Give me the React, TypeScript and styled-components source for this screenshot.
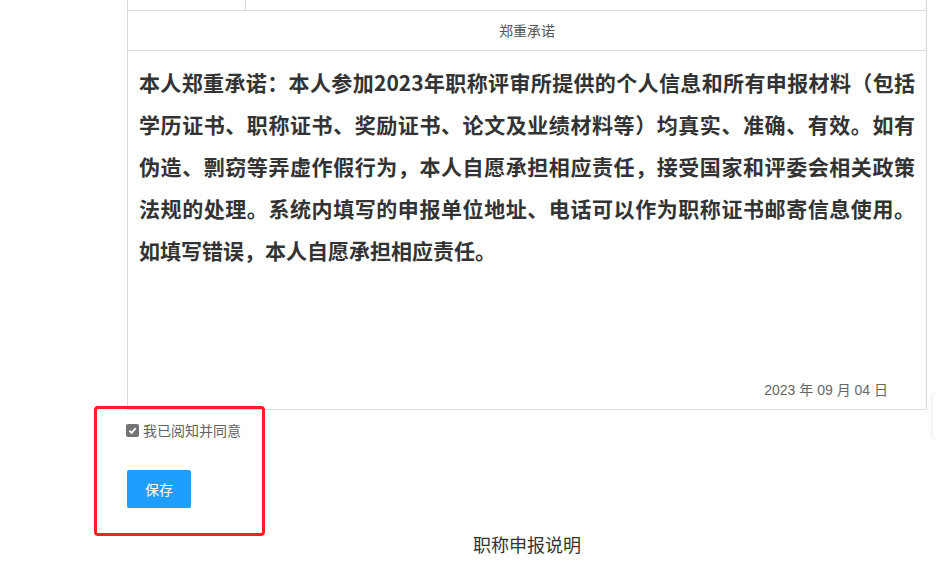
import styled, { createGlobalStyle } from "styled-components";

const GlobalStyle = createGlobalStyle`
    html, body {
        margin: 0;
        padding: 0;
        background: #fff;
    }
    body {
        font-family: "Noto Sans CJK SC", "Liberation Sans", sans-serif;
        color: #333;
    }
`;

const Page = styled.div`
    position: relative;
    width: 936px;
    height: 585px;
    overflow: hidden;
`;

const Column = styled.div`
    margin-left: 127px;
    width: 800px;
`;

const Table = styled.div`
    border: 1px solid #d9d9de;
    border-top: none;
`;

const PrevRow = styled.div`
    display: grid;
    grid-template-columns: 118px 1fr;
    height: 10px;
    border-bottom: 1px solid #d9d9de;
`;

type CellProps = { $first?: boolean };
const PrevCell = styled.div<CellProps>`
    border-right: ${(p: CellProps) => (p.$first ? "1px solid #d9d9de" : "none")};
`;

const HeadRow = styled.div`
    box-sizing: border-box;
    height: 40px;
    padding-bottom: 2px;
    display: flex;
    align-items: center;
    justify-content: center;
    font-size: 14px;
    line-height: 20px;
    color: #555;
    border-bottom: 1px solid #d9d9de;
`;

const PledgeCell = styled.div`
    box-sizing: border-box;
    height: 358px;
    padding: 10px 11px 0;
    display: flex;
    flex-direction: column;
`;

type LineProps = { $last?: boolean };
const Line = styled.div<LineProps>`
    font-size: 21px;
    font-weight: 700;
    line-height: 42px;
    color: #333;
    white-space: nowrap;
    text-align: justify;
    text-align-last: ${(p: LineProps) => (p.$last ? "left" : "justify")};
`;

const DateText = styled.div`
    margin-top: auto;
    align-self: flex-end;
    margin-right: 27px;
    margin-bottom: 9px;
    font-family: "Liberation Sans", "Noto Sans CJK SC", sans-serif;
    font-size: 14px;
    line-height: 20px;
    color: #666;
`;

const Agree = styled.label`
    margin-top: 10px;
    margin-left: -1px;
    height: 20px;
    display: flex;
    align-items: center;
    gap: 4px;
    font-size: 14px;
    color: #5f6166;
    cursor: pointer;
`;

const CheckBox = styled.span`
    width: 13px;
    height: 13px;
    border-radius: 2px;
    background: #747474;
    display: flex;
    align-items: center;
    justify-content: center;
`;

const SaveButton = styled.button`
    margin-top: 30px;
    width: 64px;
    height: 38px;
    border: none;
    border-radius: 2px;
    background: #1e9fff;
    color: #fff;
    font-family: "Noto Sans CJK SC", sans-serif;
    font-size: 14px;
    cursor: pointer;
`;

const Title = styled.div`
    margin-top: 23px;
    text-align: center;
    font-size: 18px;
    line-height: 26px;
    color: #333;
`;

const Highlight = styled.div`
    position: absolute;
    left: 94px;
    top: 406px;
    width: 171px;
    height: 130px;
    box-sizing: border-box;
    border: 3px solid #ff1f1f;
    border-radius: 4px;
    pointer-events: none;
`;

const SideShadow = styled.div`
    position: absolute;
    left: 933px;
    top: 394px;
    width: 40px;
    height: 44px;
    background: #fff;
    box-shadow: 0 0 5px rgba(0, 0, 0, 0.12);
`;

const lines = [
    "本人郑重承诺：本人参加2023年职称评审所提供的个人信息和所有申报材料（包括",
    "学历证书、职称证书、奖励证书、论文及业绩材料等）均真实、准确、有效。如有",
    "伪造、剽窃等弄虚作假行为，本人自愿承担相应责任，接受国家和评委会相关政策",
    "法规的处理。系统内填写的申报单位地址、电话可以作为职称证书邮寄信息使用。",
    "如填写错误，本人自愿承担相应责任。",
];

function App() {
    return (
        <>
            <GlobalStyle />
            <Page>
                <Column>
                    <Table>
                        <PrevRow>
                            <PrevCell $first />
                            <PrevCell />
                        </PrevRow>
                        <HeadRow>郑重承诺</HeadRow>
                        <PledgeCell>
                            {lines.map((text, i) => (
                                <Line key={i} $last={i === lines.length - 1}>{text}</Line>
                            ))}
                            <DateText>2023 年 09 月 04 日</DateText>
                        </PledgeCell>
                    </Table>

                    <Agree>
                        <CheckBox>
                            <svg width="9" height="9" viewBox="0 0 10 10">
                                <path d="M1.5 5.2 L4 7.6 L8.6 2.4" fill="none" stroke="#fff" strokeWidth="2" />
                            </svg>
                        </CheckBox>
                        我已阅知并同意
                    </Agree>
                    <SaveButton>保存</SaveButton>
                    <Title>职称申报说明</Title>
                </Column>

                <Highlight />
                <SideShadow />
            </Page>
        </>
    );
}

export default App;
